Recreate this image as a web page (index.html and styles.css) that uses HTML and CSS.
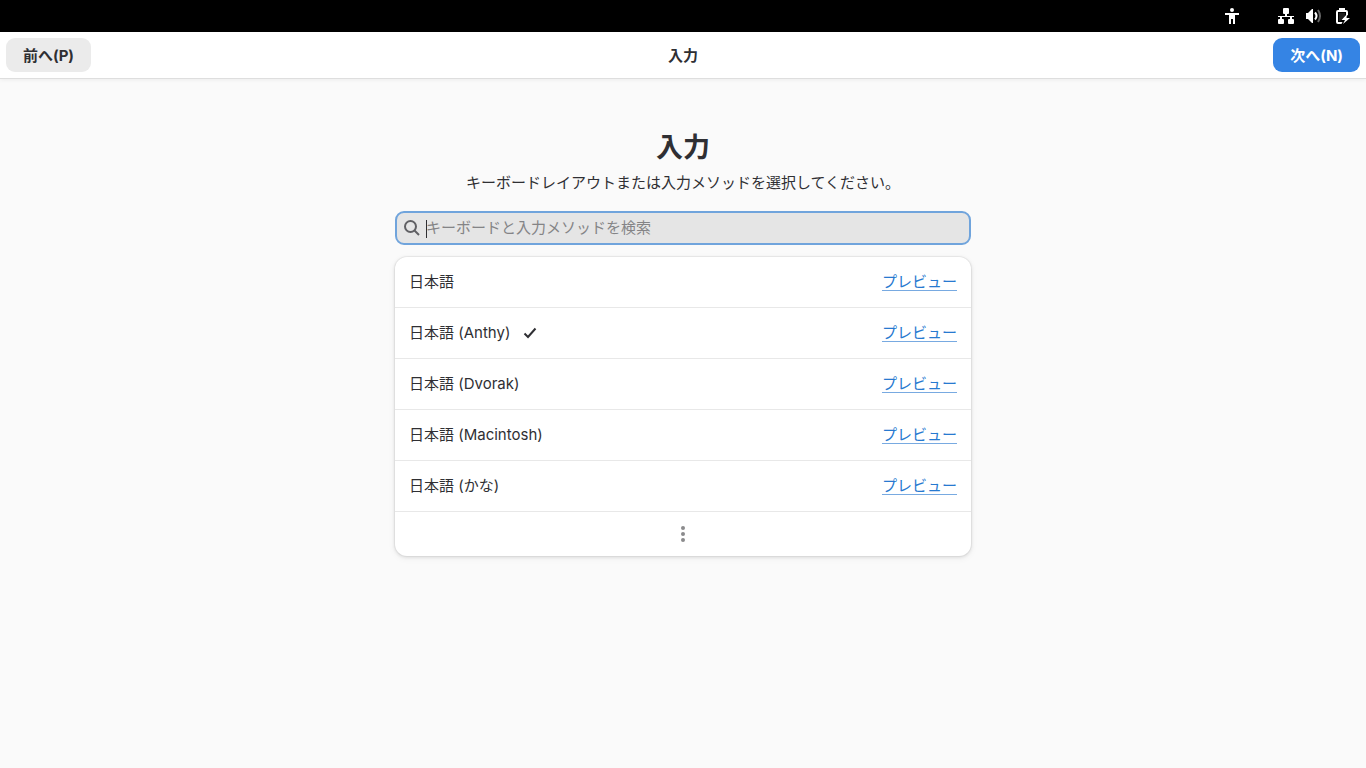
FILE: index.html
```html
<!DOCTYPE html>
<html lang="ja">
<head>
<meta charset="utf-8">
<meta name="viewport" content="width=device-width, initial-scale=1">
<title>入力</title>
<link rel="stylesheet" href="styles.css">
</head>
<body>
<div class="topbar">
  <svg class="status-icon accessibility" viewBox="0 0 16 16" aria-hidden="true"><circle cx="8" cy="2" r="2"/><path d="M1 5h14v2h-4v9H9v-5H7v5H5V7H1z"/></svg>
  <svg class="status-icon" viewBox="0 0 16 16" aria-hidden="true"><rect x="5" y="0" width="6" height="6" rx="1"/><rect x="0" y="11" width="6" height="5" rx="1"/><rect x="10" y="11" width="6" height="5" rx="1"/><path d="M7 5h2v3h7v1h-2v3h-2V9H4v3H2V9H0V8h7z"/></svg>
  <svg class="status-icon" viewBox="0 0 16 16" aria-hidden="true"><path d="M0 5h2l4-4h1v14H6l-4-4H0z"/><path class="wave" d="M9 4.500q3 3.500 0 7"/><path class="wave faint" d="M12 2q4 6 0 12"/></svg>
  <svg class="status-icon" viewBox="0 0 16 16" aria-hidden="true"><path d="M5 0h6v2h1q2 0 2 2v3l-2 1V4H4v10h4.500l-1 2H4q-2 0-2-2V4q0-2 2-2h1z"/><path d="M5 5h6v3l-5 5H5z" opacity=".12"/><path d="M13 6 7.500 12H11l-2 4 7-6h-3.500z"/></svg>
</div>
<header class="headerbar">
  <button class="button" type="button">前へ(P)</button>
  <div class="window-title">入力</div>
  <button class="button suggested" type="button">次へ(N)</button>
</header>
<main class="page">
  <h1 class="title">入力</h1>
  <p class="description">キーボードレイアウトまたは入力メソッドを選択してください。</p>
  <label class="search">
    <svg class="search-icon" viewBox="0 0 16 16" aria-hidden="true"><circle cx="6.500" cy="6.500" r="5.500"/><path d="m10.500 10.500 4.500 4.500"/></svg>
    <span class="field"><input class="search-input" type="text" placeholder="キーボードと入力メソッドを検索" aria-label="キーボードと入力メソッドを検索"></span>
  </label>
  <ul class="list">
    <li class="row"><span>日本語</span><a class="preview" href="#">プレビュー</a></li>
    <li class="row"><span>日本語 (Anthy)</span><svg class="check" viewBox="0 0 16 16" aria-label="選択済み"><path d="m2.500 8.500 3.500 3.500L13.500 3.500"/></svg><a class="preview" href="#">プレビュー</a></li>
    <li class="row"><span>日本語 (Dvorak)</span><a class="preview" href="#">プレビュー</a></li>
    <li class="row"><span>日本語 (Macintosh)</span><a class="preview" href="#">プレビュー</a></li>
    <li class="row"><span>日本語 (かな)</span><a class="preview" href="#">プレビュー</a></li>
    <li><button class="more" type="button" aria-label="さらに表示"><svg class="dots" viewBox="0 0 16 16" aria-hidden="true"><circle cx="8" cy="2" r="2"/><circle cx="8" cy="8" r="2"/><circle cx="8" cy="14" r="2"/></svg></button></li>
  </ul>
</main>
</body>
</html>
```
FILE: styles.css
```css
* { box-sizing: border-box; }

body {
  margin: 0;
  min-height: 100vh;
  background: #fafafa;
  color: #2f2f33;
  font: 15px/22px Inter, "Noto Sans CJK JP", sans-serif;
}

button, input { font: inherit; color: inherit; }

.topbar {
  display: flex;
  align-items: center;
  justify-content: flex-end;
  gap: 12px;
  height: 32px;
  padding: 0 16px;
  background: #000;
}

.status-icon { width: 16px; height: 16px; fill: #fff; }
.accessibility { margin-right: 26px; }
.wave { fill: none; stroke: #fff; stroke-width: 2; }
.faint { opacity: .4; }

.headerbar {
  display: grid;
  grid-template-columns: 1fr auto 1fr;
  align-items: center;
  padding: 6px;
  background: #fff;
  box-shadow: 0 1px #dedede, 0 2px 4px rgba(0, 0, 0, .06);
}

.button {
  justify-self: start;
  padding: 7px 17px 5px;
  border: 0;
  border-radius: 9px;
  background: #ebebeb;
  font-weight: 700;
}

.suggested {
  justify-self: end;
  background: #3584e4;
  color: #fff;
}

.window-title {
  padding-top: 2px;
  font-weight: 700;
}

.page {
  max-width: 600px;
  margin: 0 auto;
  padding: 51px 12px 24px;
}

.title {
  margin: 0;
  font-size: 27px;
  line-height: 38px;
  font-weight: 700;
  text-align: center;
}

.description {
  margin: 5px 0 17px;
  text-align: center;
}

.search {
  display: flex;
  align-items: center;
  gap: 6px;
  padding: 4px 7px;
  border: 2px solid #70a4dc;
  border-radius: 9px;
  background: #e5e5e5;
}

.search-icon {
  width: 16px;
  height: 16px;
  fill: none;
  stroke: #606064;
  stroke-width: 2;
}

.field {
  position: relative;
  flex: 1;
  display: flex;
}

.field::before {
  content: "";
  position: absolute;
  left: 0;
  top: 3px;
  width: 1px;
  height: 18px;
  background: #2f2f33;
}

.search-input {
  width: 100%;
  height: 22px;
  padding: 0;
  border: 0;
  outline: 0;
  background: transparent;
  caret-color: transparent;
}

.search-input::placeholder { color: #848486; opacity: 1; }

.list {
  margin: 12px 0 0;
  padding: 0;
  list-style: none;
  border-radius: 12px;
  background: #fff;
  box-shadow: 0 0 0 1px rgba(0, 0, 0, .04), 0 1px 3px 1px rgba(0, 0, 0, .08), 0 2px 6px 2px rgba(0, 0, 0, .03);
}

.row {
  display: flex;
  align-items: center;
  gap: 12px;
  padding: 14px;
  border-bottom: 1px solid #e8e8e8;
}

.preview {
  margin-left: auto;
  color: #2779d0;
  text-decoration-color: #78aae1;
  text-decoration-thickness: 1px;
  text-underline-offset: 3px;
}

.check {
  width: 16px;
  height: 16px;
  fill: none;
  stroke: #2f2f33;
  stroke-width: 2;
}

.more {
  display: flex;
  align-items: center;
  justify-content: center;
  width: 100%;
  height: 44px;
  padding: 0;
  border: 0;
  background: transparent;
}

.dots { width: 16px; height: 16px; fill: #8b8b8d; }
```
